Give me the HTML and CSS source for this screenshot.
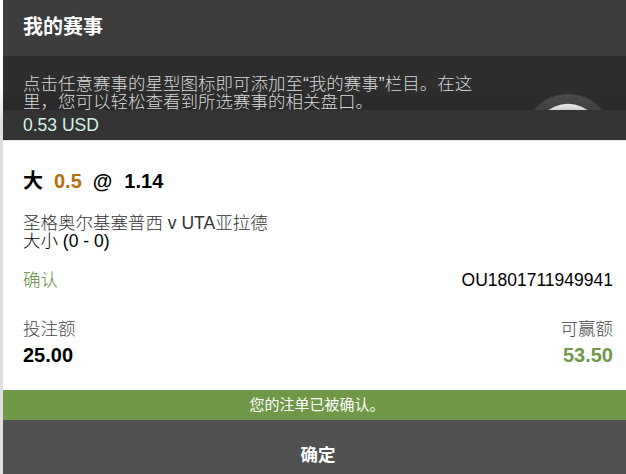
FILE: index.html
```html
<!DOCTYPE html>
<html lang="zh-CN">
<head>
<meta charset="utf-8">
<title>我的赛事</title>
<link rel="stylesheet" href="styles.css">
</head>
<body>
<div class="page">
  <div class="edge"></div>
  <main class="panel">
    <header class="title">我的赛事</header>
    <section class="intro">
      <p class="intro-text">点击任意赛事的星型图标即可添加至“我的赛事”栏目。在这<br>里，您可以轻松查看到所选赛事的相关盘口。</p>
      <svg class="dial" width="90" height="16" viewBox="0 0 90 16">
        <defs>
          <linearGradient id="ring" x1="0" y1="0" x2="0" y2="16" gradientUnits="userSpaceOnUse"><stop stop-color="#4a4a4a"/><stop offset="1" stop-color="#414141"/></linearGradient>
          <linearGradient id="face" x1="0" y1="10" x2="0" y2="16" gradientUnits="userSpaceOnUse"><stop stop-color="#e9e9e9"/><stop offset="1" stop-color="#d2d2d2"/></linearGradient>
        </defs>
        <circle cx="45" cy="44" r="44" fill="url(#ring)"/>
        <circle cx="45" cy="44" r="34.2" fill="url(#face)"/>
      </svg>
    </section>
    <div class="balance">0.53 USD</div>
    <section class="slip">
      <div class="pick"><span>大</span><span class="line">0.5</span><span>@</span><span class="price">1.14</span></div>
      <div class="match">圣格奥尔基塞普西 v UTA亚拉德</div>
      <div class="market">大小 (0 - 0)</div>
      <div class="row status"><span class="ok">确认</span><span>OU1801711949941</span></div>
      <div class="row labels"><span>投注额</span><span>可赢额</span></div>
      <div class="row amounts"><span>25.00</span><span class="ok">53.50</span></div>
    </section>
    <div class="notice">您的注单已被确认。</div>
    <div class="confirm">确定</div>
  </main>
</div>
</body>
</html>
```
FILE: styles.css
```css
* { box-sizing: border-box; }
body {
  margin: 0;
  font-family: "Liberation Sans", "Noto Sans CJK SC", sans-serif;
  font-size: 17.5px;
  color: #000;
  background: #fff;
}
.page { display: flex; width: 626px; height: 474px; overflow: hidden; }
.edge {
  width: 3px;
  background: linear-gradient(#fff 85px, #e0e0e0 125px);
}
.panel { flex: 1; display: flex; flex-direction: column; background: #fff; }
.title {
  height: 56px;
  padding-left: 20px;
  line-height: 55px;
  font-size: 20px;
  font-weight: bold;
  color: #fff;
  background: #3d3d3d;
}
.intro {
  display: flex;
  justify-content: space-between;
  height: 54px;
  padding: 19px 13px 0 20px;
  overflow: hidden;
  background: linear-gradient(#2d2d2d 35px, #292929);
}
.intro-text {
  margin: 0;
  line-height: 18px;
  font-weight: 300;
  white-space: nowrap;
  color: #d8d8d8;
}
.dial { margin-top: 19px; }
.balance {
  height: 30px;
  padding-left: 20px;
  line-height: 30px;
  color: #d4f2e6;
  background: #333;
}
.slip {
  height: 250px;
  padding: 26px 13px 0 20px;
  border-top: 1px solid #e4e4e4;
}
.pick {
  display: flex;
  gap: 11px;
  height: 28px;
  line-height: 28px;
  font-size: 20px;
  font-weight: bold;
}
.price { margin-left: 1px; }
.line { color: #b86e0e; }
.match {
  height: 18px;
  margin-top: 19px;
  line-height: 18px;
  font-weight: 300;
  color: #333;
}
.market { height: 18px; line-height: 18px; font-weight: 300; }
.row { display: flex; justify-content: space-between; }
.status { margin-top: 18px; height: 24px; line-height: 24px; font-weight: 300; }
.ok { color: #70984a; }
.status .ok { color: #608a38; }
.labels {
  margin-top: 26px;
  height: 22px;
  line-height: 22px;
  font-weight: 300;
  color: #484848;
}
.amounts {
  margin-top: 1px;
  height: 28px;
  line-height: 28px;
  font-size: 20px;
  font-weight: bold;
}
.notice {
  height: 30px;
  padding-left: 5px;
  line-height: 29px;
  text-align: center;
  font-size: 15px;
  color: #fff;
  background: #709849;
}
.confirm {
  height: 54px;
  padding-left: 7px;
  line-height: 70px;
  text-align: center;
  font-size: 17.5px;
  font-weight: bold;
  color: #fff;
  background: #515151;
}
```
